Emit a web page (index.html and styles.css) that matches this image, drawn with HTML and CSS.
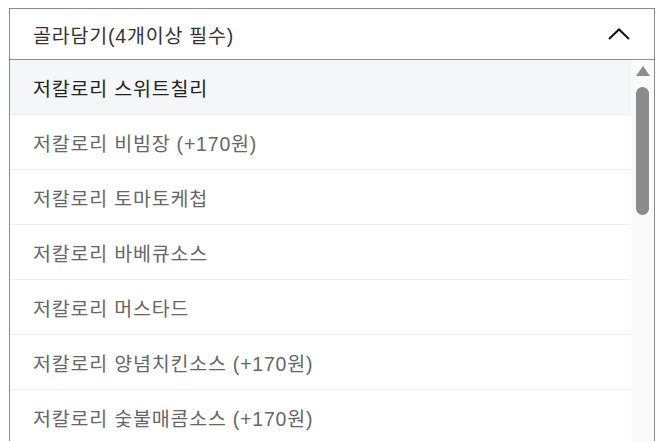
FILE: index.html
```html
<html>
<head>
    <link rel="stylesheet" href="styles.css">
</head>
<body>
    <div class="select">
        <div class="select-head">
            <span class="select-title">골라담기(4개이상 필수)</span>
            <svg class="chevron" width="22" height="12" viewBox="0 0 22 12">
                <polyline points="1,11 11,1.5 21,11" fill="none" stroke="#111" stroke-width="2"/>
            </svg>
        </div>
        <div class="select-body">
            <ul class="option-list">
                <li class="option active">저칼로리 스위트칠리</li>
                <li class="option">저칼로리 비빔장 (+170원)</li>
                <li class="option">저칼로리 토마토케첩</li>
                <li class="option">저칼로리 바베큐소스</li>
                <li class="option">저칼로리 머스타드</li>
                <li class="option">저칼로리 양념치킨소스 (+170원)</li>
                <li class="option">저칼로리 숯불매콤소스 (+170원)</li>
            </ul>
            <div class="scroll-track">
                <div class="scroll-up"></div>
                <div class="scroll-thumb"></div>
            </div>
        </div>
    </div>
</body>
</html>
```

FILE: styles.css
```css
body {
    margin: 8px 9px 0 9px;
    background-color: #fff;
    font-family: "Liberation Sans", "Noto Sans CJK KR", sans-serif;
    overflow: hidden;
}

.select {
    border: 1px solid #8a8a8a;
    border-bottom: none;
    height: 433px;
    display: flex;
    flex-direction: column;
}

.select-head {
    height: 50px;
    flex-shrink: 0;
    display: flex;
    align-items: center;
    justify-content: space-between;
    padding: 0 24px 0 23px;
    border-bottom: 1px solid #8a8a8a;
}

.select-title {
    font-size: 19.5px;
    letter-spacing: 0.8px;
    color: #333;
}

.chevron {
    display: block;
}

.select-body {
    flex: 1;
    display: flex;
    overflow: hidden;
}

.option-list {
    flex: 1;
    list-style: none;
    margin: 0;
    padding: 0;
}

.option {
    height: 54px;
    display: flex;
    align-items: center;
    padding-left: 23px;
    font-size: 19.5px;
    letter-spacing: 0.8px;
    color: #666;
    border-bottom: 1px solid #eee;
}

.option.active {
    background-color: #f5f6f8;
    color: #222;
}

.scroll-track {
    width: 23px;
    background-color: #fafafa;
    display: flex;
    flex-direction: column;
    align-items: center;
}

.scroll-up {
    width: 0;
    height: 0;
    margin-top: 6px;
    border-left: 7px solid transparent;
    border-right: 7px solid transparent;
    border-bottom: 10px solid #8c8c8c;
}

.scroll-thumb {
    width: 13px;
    height: 128px;
    margin-top: 11px;
    border-radius: 7px;
    background-color: #8c8c8c;
}
```
